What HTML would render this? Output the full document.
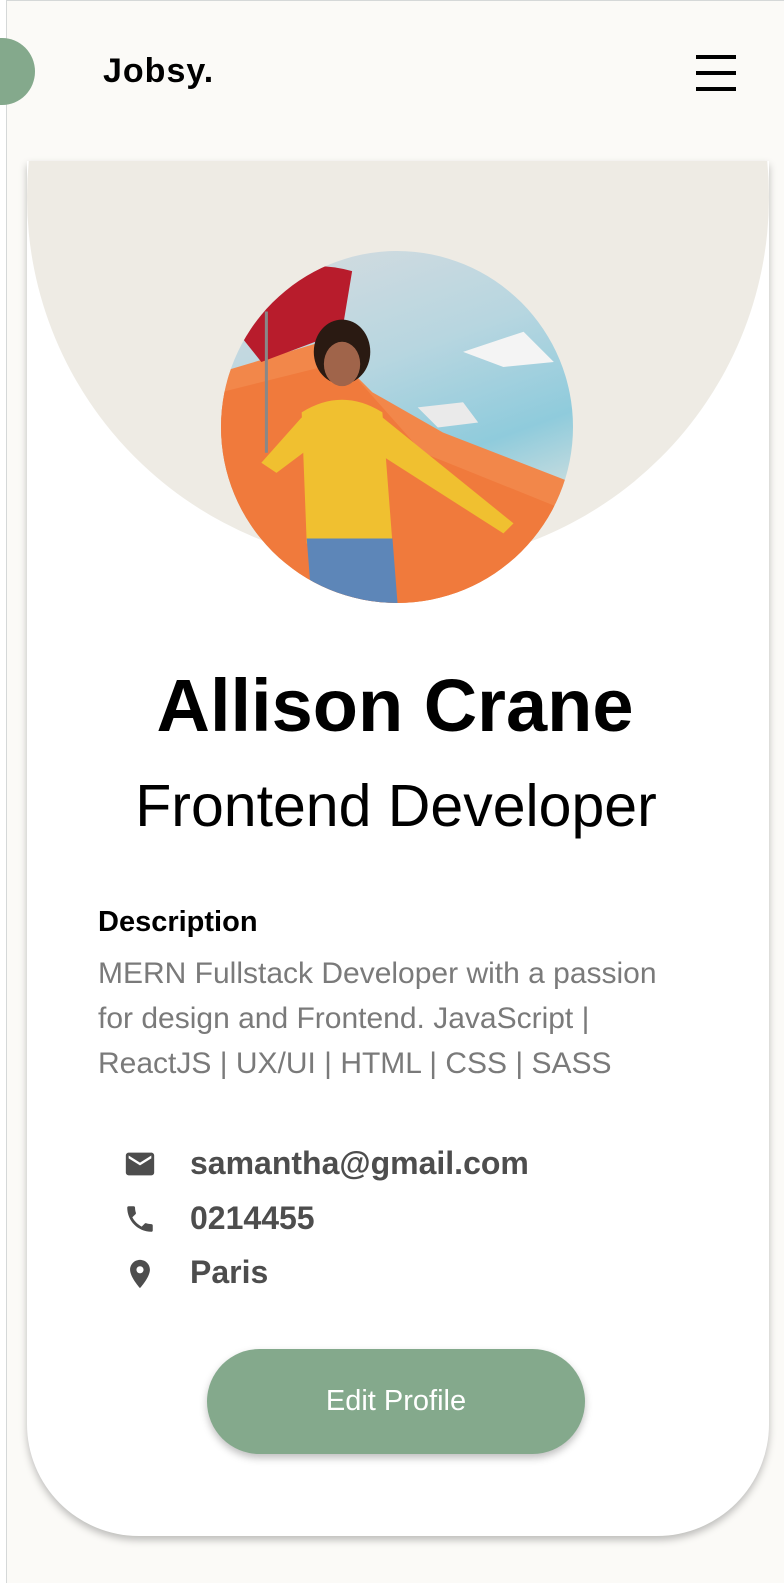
<!DOCTYPE html>
<html><head><meta charset="utf-8"><style>
*{margin:0;padding:0;box-sizing:border-box}
body{width:784px;height:1583px;background:#fbfaf7;font-family:"Liberation Sans",sans-serif;position:relative;overflow:hidden}
.lb{position:absolute;left:0;top:0;width:7px;height:1583px;background:#fff;border-right:1px solid #d5d8d8}
.tb{position:absolute;left:0;top:0;width:784px;height:1px;background:#d5d8d8}
.dot{position:absolute;left:-31px;top:38px;width:66px;height:67px;border-radius:50%;background:#84a98c}
.logo{position:absolute;left:103px;top:52px;font-size:34px;font-weight:bold;color:#000;letter-spacing:1px}
.hb{position:absolute;left:696px;width:40px;height:3.5px;background:#000}
.card{position:absolute;left:27px;top:161px;width:742px;height:1375px;background:#fff;border-radius:0 0 112px 112px;overflow:hidden;box-shadow:0 4px 8px rgba(0,0,0,.25)}
.bg{position:absolute;left:0;top:-333px;width:742px;height:738px;border-radius:50%;background:#eeebe4}
.photo{position:absolute;left:194px;top:90px;width:352px;height:352px;border-radius:50%;overflow:hidden;background:linear-gradient(160deg,#d8dcdf 0%,#b7d6e0 35%,#8fcbdc 60%,#e9e7e0 85%)}
.t{position:absolute;width:100%;text-align:center;color:#000}
.c{position:absolute;left:163px;font-size:32px;line-height:40px;color:#4d4d4d;font-weight:bold}
</style></head><body>
<div class="tb"></div>
<div class="lb"></div>
<div class="dot"></div>
<div class="logo">Jobsy.</div>
<div class="hb" style="top:55px"></div><div class="hb" style="top:71px"></div><div class="hb" style="top:87px"></div>
<div class="card">
<div class="bg"></div>
<div class="photo">
<svg width="352" height="352" viewBox="0 0 349 349">
<path d="M0 120 L100 90 L150 140 L220 180 L349 230 L349 349 L0 349Z" fill="#f2874a"/>
<path d="M0 140 L120 110 L200 200 L349 260 L349 349 L0 349Z" fill="#f07a3c"/>
<path d="M0 60 Q60 0 130 20 L120 80 L40 110Z" fill="#b81c2c"/>
<line x1="45" y1="60" x2="45" y2="200" stroke="#888" stroke-width="3"/>
<ellipse cx="120" cy="100" rx="28" ry="32" fill="#2a1a12"/>
<ellipse cx="120" cy="112" rx="18" ry="22" fill="#a0644a"/>
<path d="M80 160 Q120 135 160 160 L170 290 L85 290Z" fill="#f0c030"/>
<path d="M80 165 L40 210 L55 220 L95 190Z" fill="#f0c030"/>
<path d="M160 165 L290 270 L280 280 L155 200Z" fill="#f0c030"/>
<path d="M85 285 L170 285 L175 349 L90 349Z" fill="#5d86b8"/>
<path d="M240 100 L300 80 L330 110 L280 115Z" fill="#f4f4f4"/>
<path d="M195 155 L240 150 L255 170 L215 175Z" fill="#eaeaea"/>
</svg>
</div>
<div class="t" style="top:502px;left:-3px;font-size:74px;font-weight:bold">Allison Crane</div>
<div class="t" style="top:611px;left:-2px;font-size:59px;font-weight:300">Frontend Developer</div>
<div style="position:absolute;left:71px;top:745px;font-size:29px;font-weight:bold;color:#000">Description</div>
<div style="position:absolute;left:71px;top:790px;width:580px;font-size:30px;line-height:45px;color:#7a7a7a">MERN Fullstack Developer with a passion for design and Frontend. JavaScript | ReactJS | UX/UI | HTML | CSS | SASS</div>
<svg style="position:absolute;left:96px;top:986px" width="34" height="34" viewBox="0 0 24 24"><path fill="#4d4d4d" d="M20 4H4c-1.1 0-2 .9-2 2v12c0 1.1.9 2 2 2h16c1.1 0 2-.9 2-2V6c0-1.1-.9-2-2-2zm0 4l-8 5-8-5V6l8 5 8-5v2z"/></svg>
<svg style="position:absolute;left:96px;top:1041px" width="34" height="34" viewBox="0 0 24 24"><path fill="#4d4d4d" d="M6.6 10.8c1.4 2.8 3.8 5.1 6.6 6.6l2.2-2.2c.3-.3.7-.4 1-.2 1.1.4 2.3.6 3.6.6.6 0 1 .4 1 1V20c0 .6-.4 1-1 1-9.4 0-17-7.6-17-17 0-.6.4-1 1-1h3.5c.6 0 1 .4 1 1 0 1.3.2 2.5.6 3.6.1.3 0 .7-.2 1L6.6 10.8z"/></svg>
<svg style="position:absolute;left:96px;top:1096px" width="34" height="34" viewBox="0 0 24 24"><path fill="#4d4d4d" d="M12 2C8.1 2 5 5.1 5 9c0 5.2 7 13 7 13s7-7.8 7-13c0-3.9-3.1-7-7-7zm0 9.5c-1.4 0-2.5-1.1-2.5-2.5s1.1-2.5 2.5-2.5 2.5 1.1 2.5 2.5-1.1 2.5-2.5 2.5z"/></svg>
<div class="c" style="top:982px">samantha@gmail.com</div>
<div class="c" style="top:1037px">0214455</div>
<div class="c" style="top:1091px">Paris</div>
<div style="position:absolute;left:180px;top:1188px;width:378px;height:105px;border-radius:53px;background:#84a98c;color:#fff;font-size:29px;line-height:105px;text-align:center;box-shadow:0 4px 8px rgba(0,0,0,.25)">Edit Profile</div>
</div>
</body></html>
